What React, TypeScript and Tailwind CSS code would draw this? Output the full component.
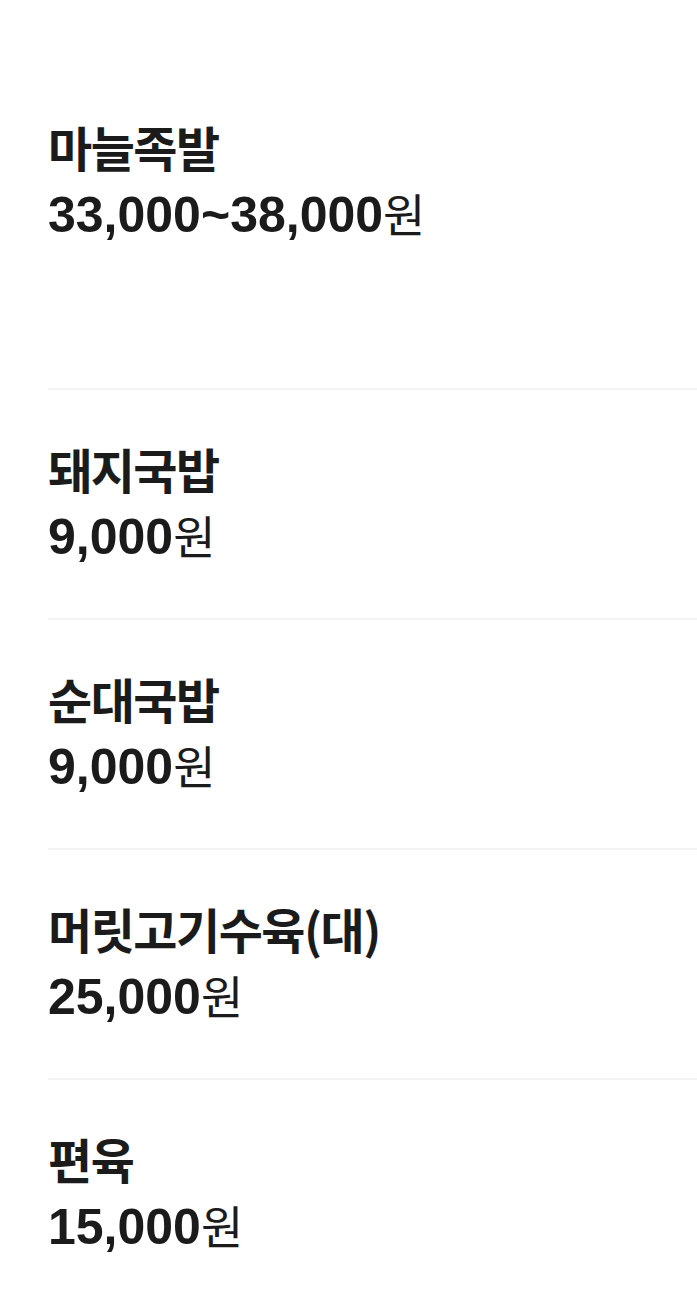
const menus = [
  { name: '마늘족발', price: '33,000~38,000' },
  { name: '돼지국밥', price: '9,000' },
  { name: '순대국밥', price: '9,000' },
  { name: '머릿고기수육(대)', price: '25,000' },
  { name: '편육', price: '15,000' },
];

export default function App() {
  return (
    <div className="min-h-screen bg-white pt-[68px] pl-[48px] text-[#1b1b1b] font-['Liberation_Sans','Noto_Sans_CJK_KR',sans-serif]">
      <ul>
        {menus.map((menu, i) => (
          <li
            key={menu.name}
            className={`pt-[48px] ${i === 0 ? 'pb-[146px]' : 'pb-[54px]'} ${
              i < menus.length - 1 ? 'border-b-2 border-[#f3f3f3]' : ''
            }`}
          >
            <div className="h-[60px] text-[48px] leading-[60px] font-semibold tracking-[-1.5px] font-['Noto_Sans_CJK_KR','Liberation_Sans',sans-serif]">
              {menu.name}
            </div>
            <div className="mt-[6px] flex h-[60px] items-baseline text-[50px] leading-[60px] font-bold">
              <span>{menu.price}</span>
              <span className="text-[46px] font-normal font-['Noto_Sans_CJK_KR',sans-serif]">
                원
              </span>
            </div>
          </li>
        ))}
      </ul>
    </div>
  );
}
